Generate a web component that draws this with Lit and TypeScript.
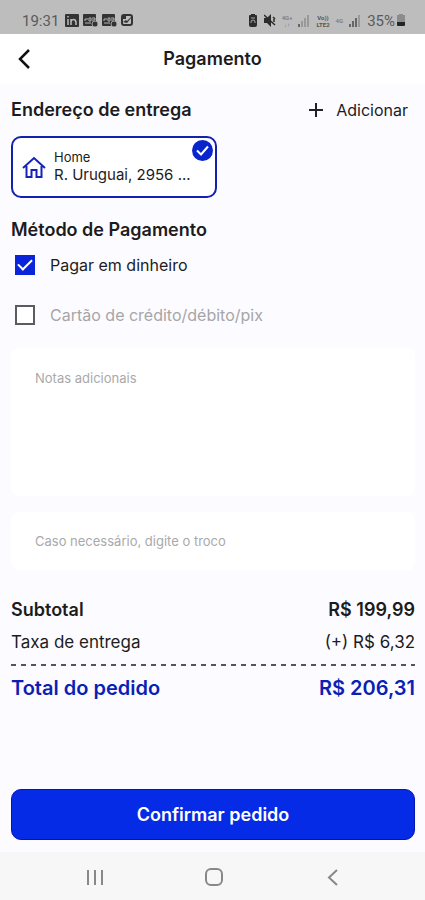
import { LitElement, html, css, svg } from "lit";
import { customElement, state } from "lit/decorators.js";

@customElement("status-bar")
class StatusBar extends LitElement {
  static styles = css`
    :host {
      display: flex;
      align-items: center;
      justify-content: space-between;
      height: 34px;
      padding: 7px 20px 0 22px;
      box-sizing: border-box;
      background: #bdbdbd;
      color: #5a5a5a;
      font-family: Roboto, sans-serif;
      font-size: 15px;
    }
    .group {
      display: flex;
      align-items: center;
      gap: 6px;
    }
    .apps {
      display: flex;
      gap: 4px;
    }
    svg {
      display: block;
    }
    .tag {
      font-size: 6px;
      line-height: 7px;
      font-weight: 700;
      text-align: center;
      color: #555;
    }
    .faint {
      color: #808080;
    }
    .charge {
      display: flex;
      align-items: center;
      gap: 2px;
    }
  `;

  private signal(level: number) {
    return html`<svg width="12" height="12" viewBox="0 0 12 12" aria-hidden="true">
      ${[0, 1, 2, 3].map(
        (i) => svg`<rect x=${i * 3} y=${9 - i * 3} width="2" height=${3 + i * 3}
          fill=${i < level ? "#666" : "#999"} />`
      )}
    </svg>`;
  }

  private cloudApp() {
    return html`<svg width="15" height="13" viewBox="0 0 15 13" aria-hidden="true">
      <rect width="13" height="12" rx="1" fill="#333" />
      <path d="M2 7V5h3M6 4h2v3H6zM9 4h3v2H9M2 9h6" fill="none" stroke="#b5b5b5" />
      <circle cx="12" cy="10" r="3" fill="#333" stroke="#a5a5a5" />
    </svg>`;
  }

  render() {
    return html`
      <div class="group">
        <span>19:31</span>
        <div class="apps">
          <svg width="14" height="13" viewBox="0 0 14 13" aria-hidden="true">
            <rect width="14" height="13" rx="1" fill="#333" />
            <path d="M3 5v6M3 2v1.500M6 11V5M6 7.500Q6.500 5.500 8.500 5.500T11 8v3" fill="none" stroke="#bdbdbd" stroke-width="1.500" />
          </svg>
          ${this.cloudApp()} ${this.cloudApp()}
          <svg width="12" height="13" viewBox="0 0 12 13" aria-hidden="true">
            <rect x="1" y="1" width="10" height="10" rx="2" fill="none" stroke="#333" stroke-width="2" />
            <path d="M2 2h3v3H2zM2 8l3-2 1 1 4-4v1L6 9z" fill="#333" />
          </svg>
        </div>
      </div>
      <div class="group">
        <svg width="10" height="13" viewBox="0 0 10 13" aria-hidden="true">
          <path d="M3 0h4v1h1q1 0 1 1v9q0 2-2 2H3q-2 0-2-2V2q0-1 1-1h1z" fill="#2c2c2c" />
          <path d="M3 9V8q0-2 2-2t2 2v1M3 4h4" stroke="#aaa" fill="none" />
        </svg>
        <svg width="12" height="13" viewBox="0 0 12 13" aria-hidden="true">
          <path d="M0 4h3l4-4v13L3 9H0z" fill="#2c2c2c" />
          <path d="M0 1l11 10M9 3l2 2M10 8V5" stroke="#2c2c2c" stroke-width="1.500" fill="none" />
        </svg>
        <span class="tag faint">4G+<br />↓↑</span>
        ${this.signal(1)}
        <span class="tag">Vo))<br />LTE2</span>
        <span class="tag faint">4G</span>
        ${this.signal(3)}
        <span class="charge">
          <span>35%</span>
          <svg width="8" height="13" viewBox="0 0 8 13" aria-hidden="true">
            <path d="M2 0h4v1h2v7H0V1h2z" fill="#8c8c8c" />
            <path d="M0 8h8v3q0 1-1 1H1q-1 0-1-1z" fill="#252525" />
          </svg>
        </span>
      </div>
    `;
  }
}

@customElement("app-root")
class AppRoot extends LitElement {
  @state() private cash = true;
  @state() private card = false;

  static styles = css`
    :host {
      display: flex;
      flex-direction: column;
      min-height: 100vh;
      background: #fcfbff;
      color: #1c1c1e;
      font-family: Inter, Roboto, sans-serif;
      font-size: 16px;
      line-height: 20px;
    }
    * {
      box-sizing: border-box;
    }
    svg {
      display: block;
      flex: none;
    }
    button {
      border: 0;
      padding: 0;
      background: none;
      color: inherit;
      font: inherit;
      cursor: pointer;
    }
    header {
      display: grid;
      grid-template-columns: 48px 1fr 48px;
      align-items: center;
      height: 50px;
      background: #fff;
    }
    .back {
      display: grid;
      place-items: center;
      height: 48px;
    }
    h1,
    h2 {
      margin: 0;
      font-size: 18px;
      line-height: 24px;
      font-weight: 600;
    }
    h1 {
      text-align: center;
    }
    main {
      flex: 1;
      display: flex;
      flex-direction: column;
      padding: 14px 10px 12px 11px;
    }
    .heading {
      display: flex;
      align-items: center;
      justify-content: space-between;
      height: 24px;
    }
    .add {
      display: flex;
      align-items: center;
      gap: 13px;
      padding-right: 7px;
    }
    .address {
      position: relative;
      display: flex;
      align-items: center;
      gap: 8px;
      align-self: flex-start;
      width: 50%;
      min-width: 206px;
      height: 62px;
      margin: 14px 0 20px;
      padding: 0 24px 0 9px;
      border: 2px solid #1420b0;
      border-radius: 10px;
      background: #fff;
      text-align: left;
    }
    .place,
    .street {
      display: block;
      white-space: nowrap;
    }
    .place {
      font-size: 13px;
      line-height: 16px;
    }
    .street {
      font-size: 15px;
    }
    .chosen {
      position: absolute;
      top: 2px;
      right: 2px;
    }
    .methods {
      margin: -2px 0 8px;
    }
    .option {
      display: flex;
      align-items: center;
      gap: 15px;
      height: 50px;
      padding-left: 4px;
    }
    .off {
      color: #a6a6a8;
    }
    .box {
      appearance: none;
      display: grid;
      place-items: center;
      width: 20px;
      height: 20px;
      margin: 0;
      border: 2px solid #5c5c5e;
      background: #fff;
    }
    .box:checked {
      border-color: #0a24dc;
      background: #0a24dc;
    }
    .box:checked::before {
      content: "";
      width: 12px;
      height: 6px;
      border: solid #fff;
      border-width: 0 0 2px 2px;
      transform: translateY(-2px) rotate(-45deg);
    }
    .field {
      display: block;
      width: 100%;
      border: 0;
      border-radius: 8px;
      padding: 20px 24px;
      background: #fff;
      color: inherit;
      font: inherit;
      font-size: 13px;
      line-height: 20px;
      resize: none;
      outline-color: #0a24dc;
    }
    .field::placeholder {
      color: #a9a9ab;
      opacity: 1;
    }
    .notes {
      height: 148px;
      margin-bottom: 16px;
    }
    .change {
      height: 58px;
      margin-bottom: 24px;
    }
    .line {
      display: flex;
      justify-content: space-between;
      align-items: center;
      height: 32px;
      font-size: 17px;
    }
    .strong {
      font-size: 18px;
      font-weight: 600;
    }
    .rule {
      width: 100%;
      height: 2px;
      margin: 6px 0;
      background: repeating-linear-gradient(90deg, #555 0 5px, transparent 5px 10px);
    }
    .total {
      color: #0b1fb4;
      font-size: 20px;
      font-weight: 600;
    }
    .confirm {
      height: 51px;
      margin-top: auto;
      border: 1px solid #0514b4;
      border-radius: 10px;
      background: #062be6;
      color: #fff;
      font-size: 18px;
      font-weight: 600;
    }
    nav {
      display: flex;
      justify-content: space-between;
      align-items: center;
      height: 48px;
      padding: 2px 20% 0;
      background: #f7f7f7;
    }
  `;

  render() {
    return html`
      <status-bar></status-bar>
      <header>
        <button class="back" aria-label="Voltar">
          <svg width="14" height="20" viewBox="0 0 14 20"><path d="M12 1L3 10l9 9" fill="none" stroke="#111" stroke-width="2.500" /></svg>
        </button>
        <h1>Pagamento</h1>
      </header>
      <main>
        <div class="heading">
          <h2>Endereço de entrega</h2>
          <button class="add">
            <svg width="14" height="14" viewBox="0 0 14 14" aria-hidden="true"><path d="M0 7h14M7 0v14" stroke="#222" stroke-width="2" /></svg>
            Adicionar
          </button>
        </div>
        <button class="address" aria-pressed="true">
          <svg width="24" height="24" viewBox="0 0 24 24" aria-hidden="true">
            <path d="M1 13L12 3l11 10M4.500 11v11h5v-7h5v7h5V11" fill="none" stroke="#1424b8" stroke-width="2" />
          </svg>
          <span>
            <span class="place">Home</span>
            <span class="street">R. Uruguai, 2956 ...</span>
          </span>
          <svg class="chosen" width="21" height="21" viewBox="0 0 21 21" aria-hidden="true">
            <circle cx="10.500" cy="10.500" r="10.500" fill="#0a24cc" />
            <path d="M5 10.500l4 4 7-8" fill="none" stroke="#fff" stroke-width="2" />
          </svg>
        </button>
        <h2>Método de Pagamento</h2>
        <div class="methods">
          <label class="option">
            <input class="box" type="checkbox" .checked=${this.cash}
              @change=${(e: Event) => (this.cash = (e.target as HTMLInputElement).checked)} />
            Pagar em dinheiro
          </label>
          <label class="option off">
            <input class="box" type="checkbox" .checked=${this.card}
              @change=${(e: Event) => (this.card = (e.target as HTMLInputElement).checked)} />
            Cartão de crédito/débito/pix
          </label>
        </div>
        <textarea class="field notes" aria-label="Notas adicionais" placeholder="Notas adicionais"></textarea>
        <input class="field change" aria-label="Troco" placeholder="Caso necessário, digite o troco" />
        <div class="line strong"><span>Subtotal</span><span>R$ 199,99</span></div>
        <div class="line"><span>Taxa de entrega</span><span>(+) R$ 6,32</span></div>
        <div class="rule"></div>
        <div class="line total"><span>Total do pedido</span><span>R$ 206,31</span></div>
        <button class="confirm">Confirmar pedido</button>
      </main>
      <nav>
        <button aria-label="Recentes">
          <svg width="19" height="17" viewBox="0 0 19 17"><path d="M3 1v15M10 1v15M17 1v15" stroke="#888" stroke-width="2" /></svg>
        </button>
        <button aria-label="Início">
          <svg width="18" height="18" viewBox="0 0 18 18"><rect x="1" y="1" width="16" height="16" rx="5" fill="none" stroke="#888" stroke-width="2" /></svg>
        </button>
        <button aria-label="Voltar">
          <svg width="17" height="17" viewBox="0 0 17 17"><path d="M14 1L6 8.500 14 16" fill="none" stroke="#888" stroke-width="2" /></svg>
        </button>
      </nav>
    `;
  }
}
